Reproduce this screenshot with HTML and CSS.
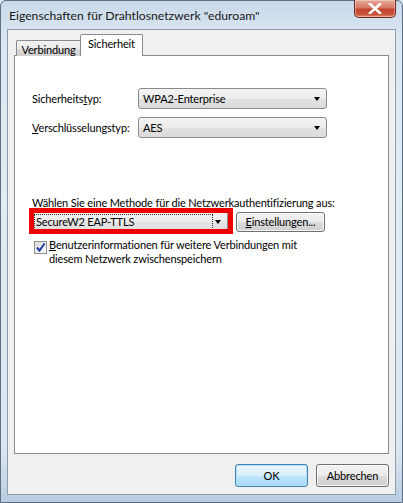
FILE: index.html
```html
<!DOCTYPE html>
<html lang="de">
<head>
<meta charset="utf-8">
<title>Eigenschaften für Drahtlosnetzwerk "eduroam"</title>
<link rel="stylesheet" href="styles.css">
</head>
<body>
<div class="window">
  <div class="titlebar">
    <span class="title">Eigenschaften für Drahtlosnetzwerk "eduroam"</span>
    <div class="close">
      <svg width="14" height="11" viewBox="0 0 14 11"><path d="M2 1 L12 10 M12 1 L2 10" stroke="#fff" stroke-width="2.6" stroke-linecap="square" fill="none"/></svg>
    </div>
  </div>
  <div class="client">
    <div class="tabs">
      <div class="tab">Verbindung</div>
      <div class="tab active">Sicherheit</div>
    </div>
    <div class="panel">
      <div class="field">
        <span class="label">Sicherheits<u>t</u>yp:</span>
        <div class="combo"><span class="value">WPA2-Enterprise</span><span class="arrow"></span></div>
      </div>
      <div class="field">
        <span class="label"><u>V</u>erschlüsselungstyp:</span>
        <div class="combo"><span class="value">AES</span><span class="arrow"></span></div>
      </div>
      <div class="method">
        <div class="prompt"><u>W</u>ählen Sie eine Methode für die Netzwerkauthentifizierung aus:</div>
        <div class="method-row">
          <div class="combo combo-wide"><span class="value focus">SecureW2 EAP-TTLS</span><span class="arrow"></span></div>
          <div class="btn btn-settings"><u>E</u>instellungen...</div>
          <div class="highlight"></div>
        </div>
        <div class="check-row">
          <span class="checkbox">
            <svg width="11" height="11" viewBox="0 0 11 11"><path d="M2 5.5 L4.5 8.5 L9.5 1.5" stroke="#1f3fa8" stroke-width="2" fill="none"/></svg>
          </span>
          <span class="check-text"><u>B</u>enutzerinformationen für weitere Verbindungen mit<br>diesem Netzwerk zwischenspeichern</span>
        </div>
      </div>
    </div>
    <div class="buttons">
      <div class="btn btn-default">OK</div>
      <div class="btn">Abbrechen</div>
    </div>
  </div>
</div>
</body>
</html>
```

FILE: styles.css
```css
html, body {
  margin: 0;
  padding: 0;
  background: #dbe6f1;
}
body {
  font-family: Lato, "Noto Sans", sans-serif;
  font-size: 11px;
  letter-spacing: -0.15px;
  color: #000;
}
u { text-decoration: underline; text-underline-offset: 1px; }

.window {
  width: 403px;
  height: 503px;
  box-sizing: border-box;
  border: 1px solid #5b6e84;
  border-radius: 6px 6px 0 0;
  background: linear-gradient(180deg, #c9d9ea 0%, #dde7f1 8%, #e3ebf3 40%, #dce6f0 90%, #b7cde2 100%);
  display: flex;
  flex-direction: column;
  padding: 0 6px 7px 6px;
}

.titlebar {
  height: 28px;
  display: flex;
  align-items: flex-start;
  justify-content: space-between;
}
.title {
  margin-top: 7px;
  margin-left: 2px;
  font-size: 12.2px;
  letter-spacing: 0;
  color: #1a1a1a;
}
.close {
  width: 42px;
  height: 18px;
  margin-top: -1px;
  border: 1px solid #6e2a22;
  border-top: none;
  border-radius: 0 0 5px 5px;
  background: linear-gradient(180deg, #e9a897 0%, #d77a66 45%, #c2432b 55%, #c9553a 85%, #e08c6e 100%);
  display: flex;
  align-items: center;
  justify-content: center;
  box-sizing: border-box;
  box-shadow: inset 0 0 0 1px rgba(255,255,255,0.35);
}

.client {
  flex: 1;
  background: #f0f0f0;
  border: 1px solid #8e9cab;
  padding: 5px 6px 7px 6px;
  display: flex;
  flex-direction: column;
}

.tabs {
  display: flex;
  align-items: flex-end;
  height: 21px;
  padding-left: 2px;
  position: relative;
  z-index: 1;
  margin-bottom: -1px;
}
.tab {
  height: 15px;
  width: 63px;
  box-sizing: content-box;
  text-align: center;
  border: 1px solid #898c95;
  border-bottom: none;
  border-right: none;
  background: linear-gradient(180deg, #f2f2f2 0%, #ebebeb 50%, #dddddd 51%, #cfcfcf 100%);
  line-height: 17px;
  border-radius: 2px 0 0 0;
}
.tab.active {
  height: 21px;
  width: 61px;
  background: #fff;
  border-right: 1px solid #898c95;
  border-radius: 2px 2px 0 0;
  line-height: 18px;
}

.panel {
  height: 399px;
  background: #fff;
  border: 1px solid #898c95;
  box-sizing: border-box;
  padding: 32px 0 0 17px;
}

.field {
  display: flex;
  align-items: center;
  height: 21px;
  margin-bottom: 8px;
}
.label {
  width: 106px;
}
.combo {
  width: 189px;
  height: 21px;
  box-sizing: border-box;
  border: 1px solid #8a8a8a;
  border-radius: 3px;
  background: linear-gradient(180deg, #f4f4f4 0%, #ececec 50%, #e2e2e2 51%, #dbdbdb 100%);
  display: flex;
  align-items: center;
  justify-content: space-between;
  padding: 0 5px 0 4px;
}
.arrow {
  width: 0;
  height: 0;
  border-left: 3.5px solid transparent;
  border-right: 3.5px solid transparent;
  border-top: 4px solid #000;
  margin-right: 1px;
}

.method {
  margin-top: 57px;
}
.prompt {
  line-height: 15px;
}
.method-row {
  position: relative;
  display: flex;
  align-items: center;
  margin-top: 1px;
  margin-left: 1px;
  gap: 8px;
  height: 21px;
}
.combo-wide {
  width: 195px;
  height: 21px;
  padding-left: 1px;
  background: linear-gradient(180deg, #f4f4f4 0%, #ececec 50%, #e4e4e4 51%, #dedede 100%);
}
.focus {
  flex: none;
  width: 176px;
  white-space: nowrap;
  outline: 1px dotted #333;
  outline-offset: 0;
  padding-left: 1px;
  line-height: 14px;
}
.highlight {
  position: absolute;
  left: -4px;
  top: -3px;
  width: 204px;
  height: 26px;
  border: 5px solid #ee0000;
  box-sizing: border-box;
}

.btn {
  width: 73px;
  height: 23px;
  box-sizing: border-box;
  border: 1px solid #707070;
  border-radius: 3px;
  background: linear-gradient(180deg, #f2f2f2 0%, #ebebeb 50%, #dddddd 51%, #cfcfcf 100%);
  box-shadow: inset 0 0 0 1px rgba(255,255,255,0.8);
  display: flex;
  align-items: center;
  justify-content: center;
}
.btn-settings {
  width: 89px;
  height: 20px;
}
.btn-default {
  border-color: #3c7fb1;
  background: linear-gradient(180deg, #eaf6fd 0%, #d9f0fc 50%, #bee6fd 51%, #a7d9f5 100%);
  box-shadow: inset 0 0 0 1px #b6e2f8;
}

.check-row {
  display: flex;
  align-items: flex-start;
  margin-top: 6px;
  margin-left: 2px;
}
.checkbox {
  width: 13px;
  height: 13px;
  box-sizing: border-box;
  border: 1px solid #8e8f8f;
  background: linear-gradient(135deg, #dcdcdc, #fbfbfb);
  display: flex;
  align-items: center;
  justify-content: center;
  margin-top: 3px;
  margin-right: 2px;
  flex-shrink: 0;
}
.check-text {
  line-height: 14px;
}

.buttons {
  display: flex;
  justify-content: flex-end;
  gap: 8px;
  margin-top: 10px;
}
```
